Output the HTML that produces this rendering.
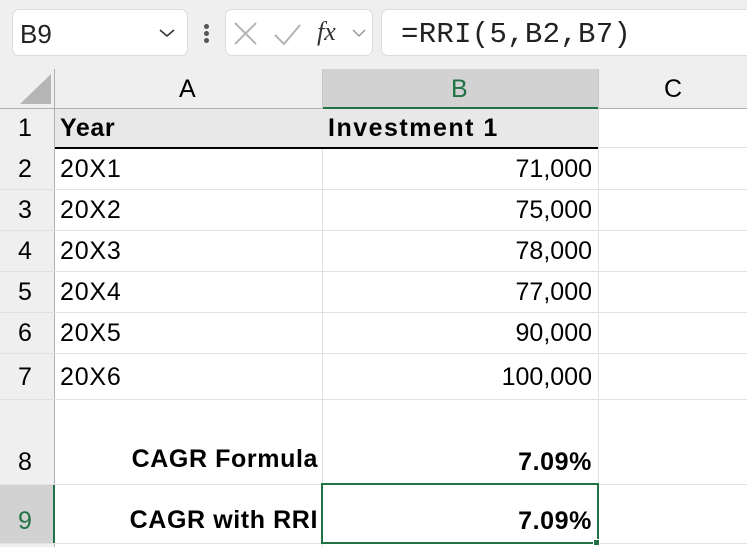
<!DOCTYPE html>
<html><head><style>
*{margin:0;padding:0;box-sizing:border-box}
body{width:747px;height:547px;overflow:hidden;background:#fff;font-family:"Liberation Sans",sans-serif;position:relative}
.bar{position:absolute;left:0;top:0;width:747px;height:69px;background:#efefef}
.box{position:absolute;background:#fff;border:1px solid #dcdcdc;border-radius:7px}
.a{position:absolute}
.cell{position:absolute;font-size:25px;color:#000;line-height:1;white-space:nowrap}
.b{font-weight:bold;letter-spacing:0.6px}
.hl{position:absolute;background:#e1e1e1}
.vl{position:absolute;background:#e1e1e1}
</style></head><body>
<div class="bar"></div>
<div class="box" style="left:12px;top:9px;width:176px;height:47px"></div>
<div class="a" style="left:20px;top:19px;font-size:26px;color:#222">B9</div>
<svg class="a" style="left:158px;top:27px" width="18" height="12"><path d="M2 3 L9 9 L16 3" stroke="#333" stroke-width="1.6" fill="none"/></svg>
<div class="a" style="left:204px;top:24px;width:5px;height:5px;border-radius:50%;background:#555"></div>
<div class="a" style="left:204px;top:31px;width:5px;height:5px;border-radius:50%;background:#555"></div>
<div class="a" style="left:204px;top:38px;width:5px;height:5px;border-radius:50%;background:#555"></div>
<div class="box" style="left:225px;top:9px;width:148px;height:47px"></div>
<svg class="a" style="left:232px;top:20px" width="140" height="28"><path d="M3 3 L24 24 M24 3 L3 24" stroke="#b4b4b4" stroke-width="2" fill="none"/><path d="M43 15 L52 24 L68 5" stroke="#b4b4b4" stroke-width="2" fill="none"/><path d="M121 10 L127 16 L133 10" stroke="#999" stroke-width="1.5" fill="none"/></svg>
<div class="a" style="left:317px;top:17px;font-family:'Liberation Serif',serif;font-style:italic;font-size:26px;color:#333">fx</div>
<div class="box" style="left:381px;top:9px;width:380px;height:47px"></div>
<div class="a" style="left:401px;top:18px;font-family:'Liberation Mono',monospace;font-size:29px;color:#222;letter-spacing:0.3px">=RRI(5,B2,B7)</div>

<div class="a" style="left:0;top:69px;width:747px;height:40px;background:#efefef"></div>
<div class="a" style="left:322px;top:69px;width:276px;height:40px;background:#d2d2d2"></div>
<div class="a" style="left:0;top:108px;width:747px;height:1px;background:#b0b0b0"></div>
<div class="a" style="left:322px;top:107px;width:276px;height:2px;background:#217346"></div>
<svg class="a" style="left:18px;top:72px" width="36" height="34"><path d="M33 2 L33 32 L2 32 Z" fill="#b5b5b5"/></svg>
<div class="a" style="left:54px;top:69px;width:1px;height:478px;background:#b0b0b0"></div>
<div class="a" style="left:322px;top:69px;width:1px;height:40px;background:#c8c8c8"></div>
<div class="a" style="left:598px;top:69px;width:1px;height:40px;background:#c8c8c8"></div>
<div class="cell" style="left:179px;top:77px">A</div>
<div class="cell" style="left:451px;top:77px;color:#217346">B</div>
<div class="cell" style="left:664px;top:77px">C</div>

<div class="a" style="left:0;top:109px;width:54px;height:438px;background:#efefef"></div>
<div class="a" style="left:0;top:484px;width:54px;height:60px;background:#d2d2d2"></div>
<div class="a" style="left:53px;top:484px;width:2px;height:60px;background:#217346"></div>

<div class="a" style="left:55px;top:109px;width:543px;height:38px;background:#e8e8e8"></div>
<div class="a" style="left:55px;top:147px;width:543px;height:2px;background:#000"></div>

<div class="hl" style="left:598px;top:147px;width:149px;height:1px"></div>
<div class="hl" style="left:0;top:189px;width:747px;height:1px"></div>
<div class="hl" style="left:0;top:230px;width:747px;height:1px"></div>
<div class="hl" style="left:0;top:271px;width:747px;height:1px"></div>
<div class="hl" style="left:0;top:312px;width:747px;height:1px"></div>
<div class="hl" style="left:0;top:353px;width:747px;height:1px"></div>
<div class="hl" style="left:0;top:399px;width:747px;height:1px"></div>
<div class="hl" style="left:0;top:484px;width:747px;height:1px"></div>
<div class="hl" style="left:0;top:543px;width:747px;height:1px"></div>
<div class="vl" style="left:322px;top:149px;width:1px;height:398px"></div>
<div class="vl" style="left:598px;top:109px;width:1px;height:438px"></div>

<div class="cell" style="left:18px;top:116px">1</div>
<div class="cell" style="left:18px;top:157px">2</div>
<div class="cell" style="left:18px;top:198px">3</div>
<div class="cell" style="left:18px;top:239px">4</div>
<div class="cell" style="left:18px;top:280px">5</div>
<div class="cell" style="left:18px;top:321px">6</div>
<div class="cell" style="left:18px;top:365px">7</div>
<div class="cell" style="left:18px;top:450px">8</div>
<div class="cell" style="left:18px;top:509px;color:#217346">9</div>

<div class="cell b" style="left:60px;top:116px">Year</div>
<div class="cell b" style="left:328px;top:116px;letter-spacing:1.5px">Investment 1</div>
<div class="cell" style="left:60px;top:157px;letter-spacing:0.8px">20X1</div>
<div class="cell" style="left:60px;top:198px;letter-spacing:0.8px">20X2</div>
<div class="cell" style="left:60px;top:239px;letter-spacing:0.8px">20X3</div>
<div class="cell" style="left:60px;top:280px;letter-spacing:0.8px">20X4</div>
<div class="cell" style="left:60px;top:321px;letter-spacing:0.8px">20X5</div>
<div class="cell" style="left:60px;top:365px;letter-spacing:0.8px">20X6</div>
<div class="cell" style="right:155px;top:157px">71,000</div>
<div class="cell" style="right:155px;top:198px">75,000</div>
<div class="cell" style="right:155px;top:239px">78,000</div>
<div class="cell" style="right:155px;top:280px">77,000</div>
<div class="cell" style="right:155px;top:321px">90,000</div>
<div class="cell" style="right:155px;top:365px">100,000</div>
<div class="cell b" style="right:429px;top:447px">CAGR Formula</div>
<div class="cell b" style="right:155px;top:450px">7.09%</div>
<div class="cell b" style="right:429px;top:508px">CAGR with RRI</div>
<div class="cell b" style="right:155px;top:509px">7.09%</div>

<div class="a" style="left:321px;top:483px;width:278px;height:61px;border:2px solid #217346"></div>
<div class="a" style="left:593px;top:539px;width:7px;height:7px;background:#217346;border:1px solid #fff"></div>
</body></html>
